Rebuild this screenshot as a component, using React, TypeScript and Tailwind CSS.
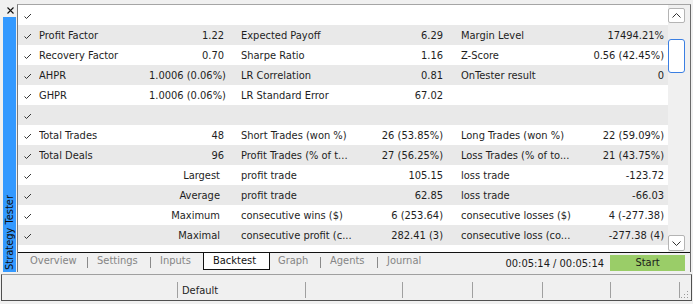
import React from "react";

type Row = { c1?: string; v1?: string; sub?: boolean; c2?: string; v2?: string; c3?: string; v3?: string; check?: boolean };

const rows: Row[] = [
  { check: true },
  { check: true, c1: "Profit Factor", v1: "1.22", c2: "Expected Payoff", v2: "6.29", c3: "Margin Level", v3: "17494.21%" },
  { check: true, c1: "Recovery Factor", v1: "0.70", c2: "Sharpe Ratio", v2: "1.16", c3: "Z-Score", v3: "0.56 (42.45%)" },
  { check: true, c1: "AHPR", v1: "1.0006 (0.06%)", c2: "LR Correlation", v2: "0.81", c3: "OnTester result", v3: "0" },
  { check: true, c1: "GHPR", v1: "1.0006 (0.06%)", c2: "LR Standard Error", v2: "67.02" },
  { check: true },
  { check: true, c1: "Total Trades", v1: "48", c2: "Short Trades (won %)", v2: "26 (53.85%)", c3: "Long Trades (won %)", v3: "22 (59.09%)" },
  { check: true, c1: "Total Deals", v1: "96", c2: "Profit Trades (% of t...", v2: "27 (56.25%)", c3: "Loss Trades (% of to...", v3: "21 (43.75%)" },
  { check: true, v1: "Largest", sub: true, c2: "profit trade", v2: "105.15", c3: "loss trade", v3: "-123.72" },
  { check: true, v1: "Average", sub: true, c2: "profit trade", v2: "62.85", c3: "loss trade", v3: "-66.03" },
  { check: true, v1: "Maximum", sub: true, c2: "consecutive wins ($)", v2: "6 (253.64)", c3: "consecutive losses ($)", v3: "4 (-277.38)" },
  { check: true, v1: "Maximal", sub: true, c2: "consecutive profit (c...", v2: "282.41 (3)", c3: "consecutive loss (co...", v3: "-277.38 (4)" },
  { check: false },
];

function Check() {
  return (
    <svg width="8" height="7" viewBox="0 0 8 7" className="block">
      <polyline points="0.5,3.5 2.5,5.5 7,1" fill="none" stroke="#333" strokeWidth="1" />
    </svg>
  );
}

function Chevron({ up }: { up?: boolean }) {
  return (
    <svg width="9" height="5" viewBox="0 0 9 5" className="block">
      <polyline
        points={up ? "0.5,4.5 4.5,0.5 8.5,4.5" : "0.5,0.5 4.5,4.5 8.5,0.5"}
        fill="none"
        stroke="#333"
        strokeWidth="1"
      />
    </svg>
  );
}

function StatusSep() {
  return <div className="mt-[7px] h-[16px] w-px bg-[#a0a0a0]" />;
}

function TabSep() {
  return <div className="mt-[4px] h-[11px] w-px bg-[#8a8a8a]" />;
}

export default function App() {
  return (
    <div className="w-[693px] h-[304px] bg-[#f0f0f0] overflow-hidden font-['DejaVu_Sans_Condensed','DejaVu_Sans',sans-serif] font-stretch-condensed text-[11px] text-[#1e1e1e]">
      <div className="flex h-[272px]">
        {/* left strip */}
        <div className="flex w-[17px] flex-col">
          <div className="h-[17px] pl-[7px] pt-[7px]">
            <svg width="7" height="7" viewBox="0 0 7 7" className="block">
              <path d="M0.5 0.5 L6.5 6.5 M6.5 0.5 L0.5 6.5" stroke="#111" strokeWidth="1.1" />
            </svg>
          </div>
          <div className="ml-[3px] flex w-[13px] flex-1 flex-col items-center justify-end bg-[#3399ff] pb-[2px]">
            <span className="rotate-180 whitespace-nowrap leading-[13px] text-[#0d0d0d] [writing-mode:vertical-rl]">
              Strategy Tester
            </span>
          </div>
        </div>

        {/* main */}
        <div className="flex w-[675px] flex-col">
          <div className="h-[4px]" />
          <div className="mr-px flex flex-1 flex-col border-l border-r border-t border-l-[#7a7a7a] border-r-[#6a6a6a] border-t-[#a5a5a5]">
            <div className="flex h-[247px]">
              {/* table */}
              <div className="w-[651px] overflow-hidden bg-white">
                {rows.map((r, i) => (
                  <div
                    key={i}
                    className={`flex h-[20px] items-start whitespace-nowrap pt-[2px] leading-[18px] ${i % 2 === 1 ? "bg-[#e9e9e9]" : "bg-white"}`}
                  >
                    <div className="flex h-[18px] w-[21px] items-center justify-end pr-[7px]">{r.check ? <Check /> : null}</div>
                    <div className="w-[110px] overflow-hidden">{r.c1}</div>
                    <div className={`w-[75px] text-right ${r.sub ? "pr-[4px]" : ""}`}>{r.v1}</div>
                    <div className="w-[146px] overflow-hidden pl-[17px]">{r.c2}</div>
                    <div className="w-[73px] text-right">{r.v2}</div>
                    <div className="w-[147px] overflow-hidden pl-[18px]">{r.c3}</div>
                    <div className="w-[74px] text-right">{r.v3}</div>
                  </div>
                ))}
              </div>
              {/* scrollbar */}
              <div className="flex w-[22px] flex-col">
                <div className="mt-[3px] flex h-[15px] w-[17px] items-center justify-center rounded-[2px] border border-[#b4b4b4] bg-white">
                  <Chevron up />
                </div>
                <div className="mt-[16px] h-[34px] w-[17px] rounded-[3px] border border-[#3b7fe2] bg-white" />
                <div className="flex-1" />
                <div className="mb-[1px] flex h-[16px] w-[17px] items-center justify-center rounded-[2px] border border-[#b4b4b4] bg-white">
                  <Chevron />
                </div>
              </div>
            </div>
            {/* tab bar */}
            <div className="flex flex-1 whitespace-nowrap border-t border-[#111]">
              <div className="h-[16px] w-[69px] pl-[12px] leading-[16px] text-[#858585]">Overview</div>
              <TabSep />
              <div className="h-[16px] w-[62px] pl-[9px] leading-[16px] text-[#858585]">Settings</div>
              <TabSep />
              <div className="h-[16px] w-[52px] pl-[9px] leading-[16px] text-[#858585]">Inputs</div>
              <div className="h-[17px] w-[67px] border-x border-b border-[#111] bg-white pl-[9px] leading-[16px] text-[#111]">
                Backtest
              </div>
              <div className="h-[16px] w-[50px] pl-[8px] leading-[16px] text-[#858585]">Graph</div>
              <TabSep />
              <div className="h-[16px] w-[56px] pl-[9px] leading-[16px] text-[#858585]">Agents</div>
              <TabSep />
              <div className="h-[16px] pl-[9px] leading-[16px] text-[#858585]">Journal</div>
              <div className="flex-1" />
              <div className="mt-[3px] h-[16px] leading-[16px] text-[#1a1a1a]">00:05:14 / 00:05:14</div>
              <div className="ml-[6px] mr-[5px] mt-[2px] flex h-[16px] w-[75px] items-center justify-center bg-[#9acd68] text-[#1a1a1a]">
                Start
              </div>
            </div>
          </div>
        </div>
      </div>

      {/* status bar */}
      <div className="ml-px mt-[2px] flex h-[27px] w-[691px] whitespace-nowrap border border-[#505050] border-t-[#a0a0a0]">
        <div className="w-[175px]" />
        <StatusSep />
        <div className="w-[127px] pl-[4px] pt-[8px] leading-[16px]">Default</div>
        <StatusSep />
        <div className="w-[96px]" />
        <StatusSep />
        <div className="w-[69px]" />
        <StatusSep />
        <div className="w-[69px]" />
        <StatusSep />
        <div className="w-[67px]" />
        <StatusSep />
        <div className="w-[68px]" />
        <StatusSep />
        <div className="flex flex-1 items-end justify-end pb-[1px] pr-[2px]">
          <svg width="9" height="9" viewBox="0 0 9 9" className="block">
            <rect x="7" y="1" width="1" height="1" fill="#9a9a9a" />
            <rect x="4" y="4" width="1" height="1" fill="#9a9a9a" />
            <rect x="7" y="4" width="1" height="1" fill="#9a9a9a" />
            <rect x="1" y="7" width="1" height="1" fill="#9a9a9a" />
            <rect x="4" y="7" width="1" height="1" fill="#9a9a9a" />
            <rect x="7" y="7" width="1" height="1" fill="#9a9a9a" />
          </svg>
        </div>
      </div>
    </div>
  );
}
